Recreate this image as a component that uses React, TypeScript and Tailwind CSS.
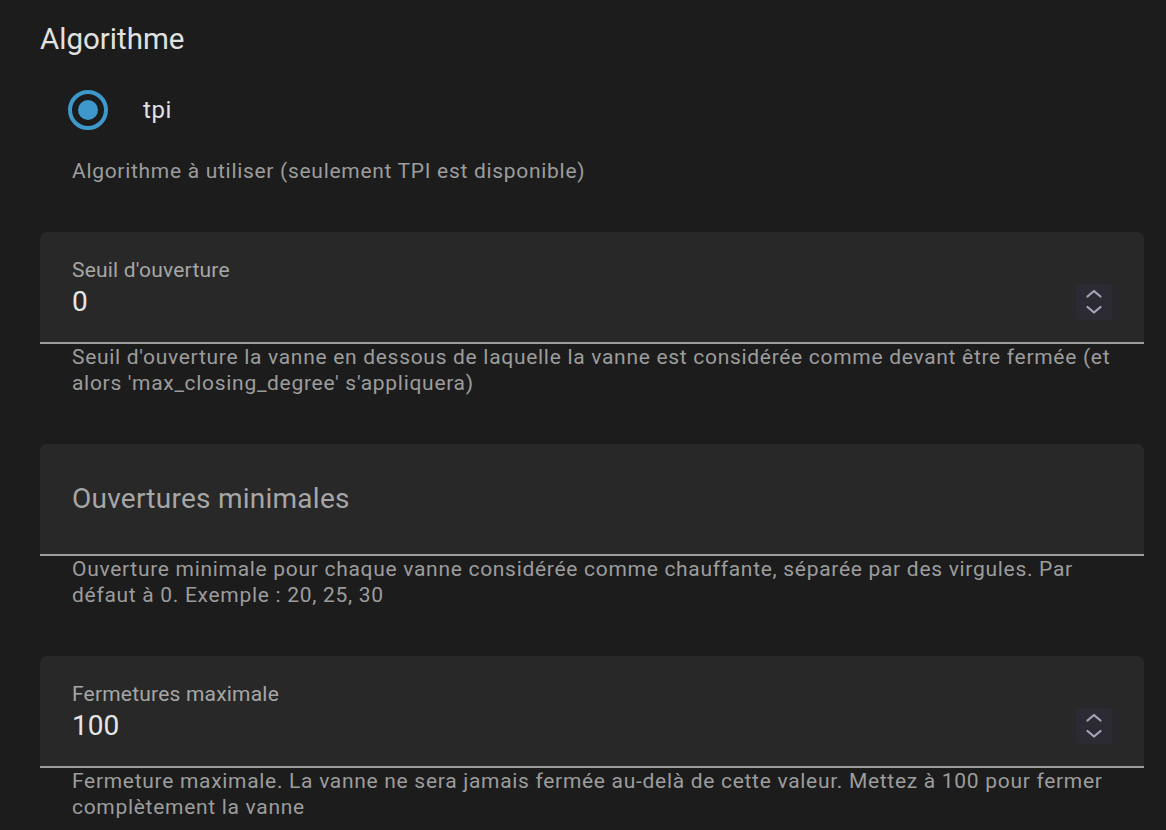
type FieldProps = {
  label: string;
  value?: string;
  helper: string;
};

function Spinner() {
  return (
    <div className="w-[36px] h-[36px] bg-[#2c2b33] rounded-[2px] flex items-center justify-center">
      <svg width="36" height="36" viewBox="0 0 36 36" fill="none" stroke="#a6a3bb" strokeWidth="2.2" strokeLinecap="round" strokeLinejoin="round">
        <polyline points="11.5 12.5 18 7 24.5 12.5" />
        <polyline points="11.5 23 18 28.5 24.5 23" />
      </svg>
    </div>
  );
}

function Field({ label, value, helper }: FieldProps) {
  return (
    <div>
      {value !== undefined ? (
        <div className="h-[112px] bg-[#282828] rounded-t-[7px] border-b-2 border-[#9e9e9e] pl-[32px] pr-[32px] pt-[26px]">
          <div className="text-[21px] leading-[24px] tracking-[0.2px] text-[#a6a6a6]">{label}</div>
          <div className="mt-[2px] flex items-center justify-between">
            <span className="text-[28px] leading-[32px] text-[#e6e6e6]">{value}</span>
            <Spinner />
          </div>
        </div>
      ) : (
        <div className="h-[112px] bg-[#282828] rounded-t-[7px] border-b-2 border-[#9e9e9e] pl-[32px] flex items-center">
          <span className="text-[28px] leading-[32px] tracking-[0.25px] text-[#a6a6a6]">{label}</span>
        </div>
      )}
      <p className="pl-[32px] pr-[28px] text-[21px] leading-[26px] tracking-[0.7px] text-[#9c9c9c]">
        {helper}
      </p>
    </div>
  );
}

export default function App() {
  return (
    <div className="min-h-[830px] w-full bg-[#1c1c1c] font-['Roboto',sans-serif] pl-[40px] pr-[22px] pt-[21px] pb-[20px]">
      <h2 className="text-[29.5px] leading-[36px] text-[#e1e1e1]">Algorithme</h2>

      <div className="mt-[33px] flex items-center h-[40px]">
        <div className="ml-[28px] w-[40px] h-[40px] rounded-full border-[4px] border-[#3e98cc] flex items-center justify-center">
          <div className="w-[20px] h-[20px] rounded-full bg-[#3e98cc]" />
        </div>
        <span className="ml-[35px] text-[24px] leading-[28px] tracking-[0.6px] text-[#e1e1e1]">tpi</span>
      </div>

      <p className="mt-[28px] pl-[32px] text-[21px] leading-[26px] tracking-[0.7px] text-[#9c9c9c]">
        Algorithme à utiliser (seulement TPI est disponible)
      </p>

      <div className="mt-[48px] flex flex-col gap-[48px]">
        <Field
          label="Seuil d'ouverture"
          value="0"
          helper="Seuil d'ouverture la vanne en dessous de laquelle la vanne est considérée comme devant être fermée (et alors 'max_closing_degree' s'appliquera)"
        />
        <Field
          label="Ouvertures minimales"
          helper="Ouverture minimale pour chaque vanne considérée comme chauffante, séparée par des virgules. Par défaut à 0. Exemple : 20, 25, 30"
        />
        <Field
          label="Fermetures maximale"
          value="100"
          helper="Fermeture maximale. La vanne ne sera jamais fermée au-delà de cette valeur. Mettez à 100 pour fermer complètement la vanne"
        />
      </div>
    </div>
  );
}
